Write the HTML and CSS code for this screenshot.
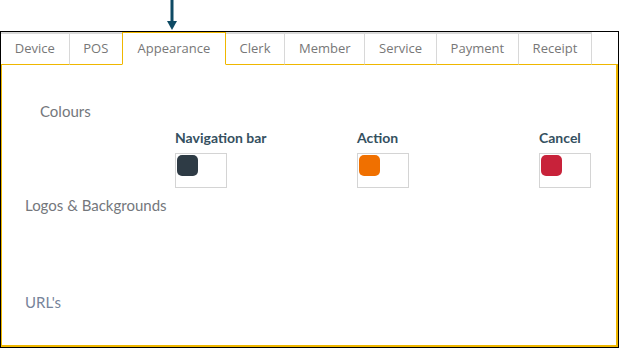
FILE: index.html
```html
<!DOCTYPE html>
<html lang="en">
  <head>
    <meta charset="UTF-8" />
    <meta name="viewport" content="width=device-width, initial-scale=1.0" />
    <title>Settings - Appearance</title>
    <link rel="stylesheet" href="styles.css">
  </head>
  <body>
    <div class="pointer">
      <svg width="12" height="31" viewBox="0 0 12 31">
        <rect x="4.5" y="0" width="3" height="23" fill="#0e4a64" />
        <polygon points="1,21 11,21 6,30" fill="#0e4a64" />
      </svg>
    </div>

    <div class="settings">
      <ul class="tabs">
        <li class="tab">Device</li>
        <li class="tab">POS</li>
        <li class="tab active">Appearance</li>
        <li class="tab">Clerk</li>
        <li class="tab">Member</li>
        <li class="tab">Service</li>
        <li class="tab">Payment</li>
        <li class="tab">Receipt</li>
      </ul>

      <div class="panel">
        <section class="group colours">
          <h3>Colours</h3>
          <div class="pickers">
            <div class="picker">
              <label>Navigation bar</label>
              <div class="swatch-box"><span class="swatch nav"></span></div>
            </div>
            <div class="picker">
              <label>Action</label>
              <div class="swatch-box"><span class="swatch action"></span></div>
            </div>
            <div class="picker">
              <label>Cancel</label>
              <div class="swatch-box"><span class="swatch cancel"></span></div>
            </div>
          </div>
        </section>

        <section class="group logos">
          <h3>Logos &amp; Backgrounds</h3>
        </section>

        <section class="group urls">
          <h3>URL's</h3>
        </section>
      </div>
    </div>
  </body>
</html>
```

FILE: styles.css
```css
* {
  box-sizing: border-box;
  margin: 0;
  padding: 0;
}

body {
  font-family: Lato, "Liberation Sans", sans-serif;
  background: #fff;
}

/* flecha que señala la pestaña */
.pointer {
  height: 31px;
  padding-left: 166px;
}

.pointer svg {
  display: block;
}

.settings {
  border: 1px solid #000;
  height: 317px;
  display: flex;
  flex-direction: column;
}

.tabs {
  list-style: none;
  display: flex;
  position: relative;
  z-index: 1;
  margin-bottom: -1px;
}

.tab {
  height: 33px;
  padding: 0 13.75px;
  line-height: 29px;
  font-family: "Open Sans", sans-serif;
  font-size: 13px;
  text-align: center;
  color: #777;
  border-top: 2px solid #d8d8d8;
  border-right: 1px solid #d8d8d8;
  border-bottom: 1px solid transparent;
}

.tab.active {
  border: 1px solid #efb700;
  border-bottom-color: #fff;
  background: #fff;
  margin-left: -1px;
  padding: 1px 14.5px 0;
}

.panel {
  flex: 1;
  border: 1px solid #efb700;
  border-width: 1px 2px 2px 1px;
  padding: 36px 23px 0;
}

.group h3 {
  font-size: 15px;
  font-weight: 400;
  line-height: 20px;
  color: #74777c;
}

.colours h3 {
  margin-left: 15px;
}

.pickers {
  display: grid;
  grid-template-columns: repeat(3, 182px);
  margin: 7px 0 0 150px;
}

.picker label {
  display: block;
  font-size: 14px;
  font-weight: 700;
  line-height: 20px;
  color: #35505f;
  margin-bottom: 5px;
}

.swatch-box {
  width: 52px;
  height: 35px;
  border: 1px solid #d4d4d4;
  padding: 1px;
}

.swatch {
  display: block;
  width: 21px;
  height: 21px;
  border-radius: 5px;
}

.swatch.nav {
  background: #2e3b45;
}

.swatch.action {
  background: #f07000;
}

.swatch.cancel {
  background: #c8223a;
}

.logos {
  margin-top: 7px;
  height: 97px;
}

.urls h3 {
  color: #76839a;
}
```
